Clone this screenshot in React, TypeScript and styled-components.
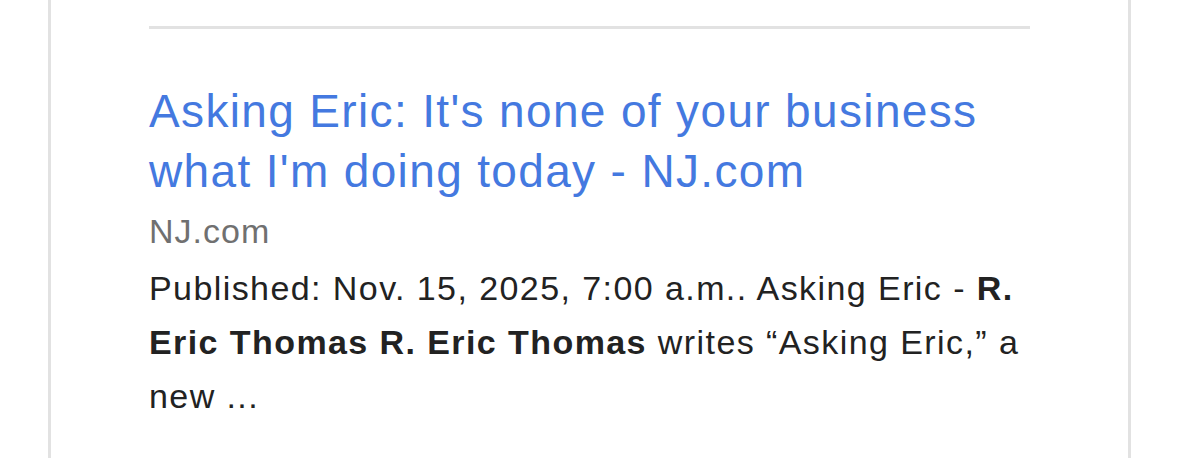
import React from 'react';
import styled, { createGlobalStyle } from 'styled-components';

const GlobalStyle = createGlobalStyle`
	html, body {
		margin: 0;
		padding: 0;
		background: #ffffff;
	}
	body {
		font-family: 'Liberation Sans', Arial, sans-serif;
	}
`;

const Page = styled.div`
	width: 1179px;
	height: 458px;
	overflow: hidden;
	background: #ffffff;
`;

const Card = styled.div`
	margin-left: 48px;
	width: 1083px;
	height: 100%;
	box-sizing: border-box;
	border-left: 3px solid #e2e2e2;
	border-right: 3px solid #e2e2e2;
	padding: 26px 98px 0;
`;

const Divider = styled.hr`
	margin: 0;
	border: none;
	height: 3px;
	background: #e2e2e2;
`;

const Result = styled.article`
	display: flex;
	flex-direction: column;
	padding-top: 52px;
`;

const Title = styled.a`
	display: block;
	font-size: 46px;
	line-height: 60px;
	letter-spacing: 1.35px;
	color: #4479e0;
	text-decoration: none;
`;

const Source = styled.div`
	margin-top: 3px;
	font-size: 34px;
	line-height: 54px;
	letter-spacing: 1px;
	color: #707070;
`;

const Snippet = styled.p`
	margin: 3px 0 0;
	font-size: 34px;
	line-height: 54px;
	letter-spacing: 1.42px;
	color: #222222;

	b {
		font-weight: 700;
	}
`;

const App = () => {
	return (
		<Page>
			<GlobalStyle />
			<Card>
				<Divider />
				<Result>
					<Title href='#'>Asking Eric: It&apos;s none of your business what I&apos;m doing today - NJ.com</Title>
					<Source>NJ.com</Source>
					<Snippet>
						Published: Nov. 15, 2025, 7:00 a.m.. Asking Eric - <b>R. Eric Thomas R. Eric Thomas</b> writes “Asking Eric,” a new ...
					</Snippet>
				</Result>
			</Card>
		</Page>
	);
};

export default App;
